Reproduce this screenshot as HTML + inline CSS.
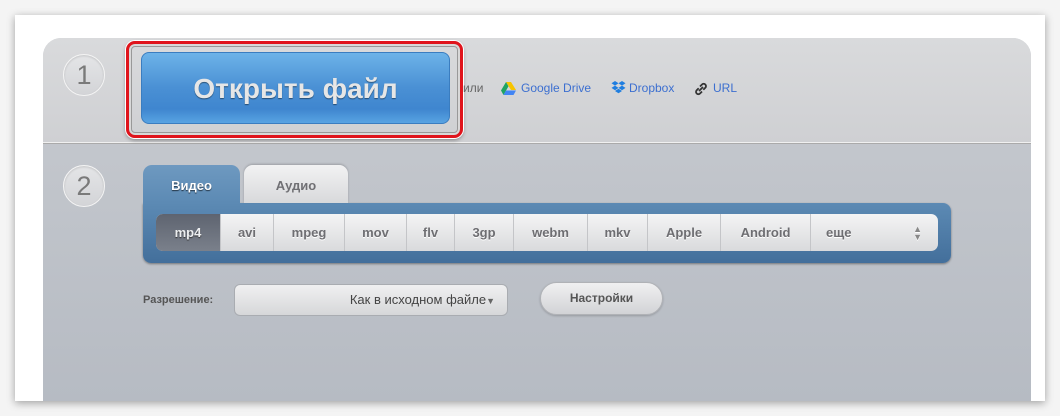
<!DOCTYPE html>
<html><head><meta charset="utf-8"><style>
*{margin:0;padding:0;box-sizing:border-box}
body{width:1060px;height:416px;background:#f4f4f4;position:relative;overflow:hidden;font-family:"Liberation Sans","DejaVu Sans",sans-serif}
.frame{position:absolute;left:15px;top:15px;width:1030px;height:386px;background:#fff;box-shadow:0 2px 8px rgba(0,0,0,.35)}
.panel{position:absolute;left:43px;top:38px;width:988px;height:363px;border-radius:18px 18px 0 0;background:linear-gradient(#c8cbd0,#b6bbc3);overflow:hidden}
.s1{position:absolute;left:0;top:0;width:988px;height:105px;background:linear-gradient(#d9dadc,#cfd0d3);border-bottom:1px solid #f0f0f0;box-shadow:0 1px 0 #aaa}
.circ{position:absolute;width:42px;height:42px;border-radius:50%;background:linear-gradient(#e4e5e7,#d3d4d7);border:1px solid #f4f4f4;box-shadow:inset 0 1px 2px rgba(0,0,0,.15);color:#7a7a7a;font-size:27px;text-align:center;line-height:40px}
.red{position:absolute;left:126px;top:41px;width:337px;height:97px;border:3px solid #e0141c;border-radius:9px;box-shadow:0 0 0 1px #fff,0 2px 4px rgba(0,0,0,.4),inset 0 0 0 2px #d8d8d8,inset 0 0 0 3px #999}
.btn{position:absolute;left:141px;top:52px;width:309px;height:72px;border-radius:8px;background:linear-gradient(#6db3e8,#4a90d4 50%,#3f86cf 80%,#58a3e2);border:1px solid #3a7dc0;color:#e6e6e6;font-weight:bold;font-size:28px;text-align:center;line-height:72px;text-shadow:0 1px 1px rgba(0,0,0,.45)}
.links{position:absolute;top:81px;font-size:12px;color:#3c6fd0}
.tab{position:absolute;top:165px;height:38px;border-radius:9px 9px 0 0;font-weight:bold;font-size:13px;text-align:center;line-height:42px}
.box{position:absolute;left:143px;top:203px;width:808px;height:60px;background:linear-gradient(#5c8ab4,#436f9b);border-radius:0 8px 8px 8px;box-shadow:0 1px 2px rgba(0,0,0,.4)}
.bar{position:absolute;left:156px;top:214px;width:782px;height:37px;border-radius:7px;background:linear-gradient(#f4f4f5,#d9dadc);display:flex;overflow:hidden}
.bar div{height:37px;line-height:37px;text-align:center;font-weight:bold;font-size:13px;color:#6e6e72;border-right:1px solid #c4c5c8;text-shadow:0 1px 0 #fff}
.bar .on{background:linear-gradient(#5e6470,#7a808b);color:#eceef0;text-shadow:0 1px 1px #333}
</style></head><body>
<div class="frame"></div>
<div class="panel"><div class="s1"></div></div>
<div class="circ" style="left:63px;top:54px">1</div>
<div class="circ" style="left:63px;top:165px">2</div>
<div class="red"></div>
<div class="btn">Открыть файл</div>
<div class="links" style="left:463px;color:#666">или</div>
<svg style="position:absolute;left:501px;top:82px" width="15" height="13" viewBox="0 0 15 13"><path d="M5 0h5l5 8h-5z" fill="#f7c400"/><path d="M5 0l2.5 4.3L2.5 13 0 8.5z" fill="#1fa463"/><path d="M2.5 13l2.5-4.5h10L12.5 13z" fill="#4285f4"/></svg>
<div class="links" style="left:521px">Google Drive</div>
<svg style="position:absolute;left:611px;top:81px" width="15" height="14" viewBox="0 0 15 14"><path d="M4 0l3.5 2.3L4 4.6 0.5 2.3zM11 0l3.5 2.3L11 4.6 7.5 2.3zM4 4.6l3.5 2.3L4 9.2 0.5 6.9zM11 4.6l3.5 2.3L11 9.2 7.5 6.9zM7.5 7.8L11 10 7.5 12.3 4 10z" fill="#1f7ee0"/></svg>
<div class="links" style="left:629px">Dropbox</div>
<svg style="position:absolute;left:694px;top:82px" width="14" height="14" viewBox="0 0 14 14"><g fill="none" stroke="#333" stroke-width="1.8"><path d="M6 4.5l2-2a2.3 2.3 0 0 1 3.3 3.3l-2 2"/><path d="M8 9.5l-2 2a2.3 2.3 0 0 1-3.3-3.3l2-2"/><path d="M5 9l4-4"/></g></svg>
<div class="links" style="left:713px">URL</div>
<div class="box"></div>
<div class="tab" style="left:143px;width:97px;background:linear-gradient(#6e99c0,#5c8ab4);color:#fff;text-shadow:0 1px 1px #234">Видео</div>
<div class="tab" style="left:244px;width:104px;background:linear-gradient(#f2f2f3,#d8d9db);color:#707074;box-shadow:0 -1px 2px rgba(0,0,0,.2)">Аудио</div>
<div class="bar">
<div class="on" style="width:65px">mp4</div><div style="width:53px">avi</div><div style="width:71px">mpeg</div><div style="width:62px">mov</div><div style="width:48px">flv</div><div style="width:59px">3gp</div><div style="width:74px">webm</div><div style="width:60px">mkv</div><div style="width:73px">Apple</div><div style="width:90px">Android</div><div style="width:127px;border:none;text-align:left;padding-left:15px;position:relative">еще<span style="position:absolute;right:16px;top:0;font-size:9px;line-height:8px;top:11px;color:#888">▲<br>▼</span></div>
</div>
<div style="position:absolute;left:143px;top:294px;font-size:11px;font-weight:bold;color:#555">Разрешение:</div>
<div style="position:absolute;left:234px;top:284px;width:274px;height:32px;border-radius:6px;background:linear-gradient(#f0f0f1,#d6d7d9);border:1px solid #a9acb1;font-size:13px;color:#444;line-height:29px;text-align:right;padding-right:12px">Как в исходном файле<span style="font-size:9px;color:#666">▼</span></div>
<div style="position:absolute;left:540px;top:282px;width:123px;height:33px;border-radius:17px;background:linear-gradient(#f0f0f1,#d2d3d6);border:1px solid #b0b2b6;box-shadow:0 1px 2px rgba(0,0,0,.2);font-size:12px;font-weight:bold;color:#555;text-align:center;line-height:31px">Настройки</div>
</body></html>
